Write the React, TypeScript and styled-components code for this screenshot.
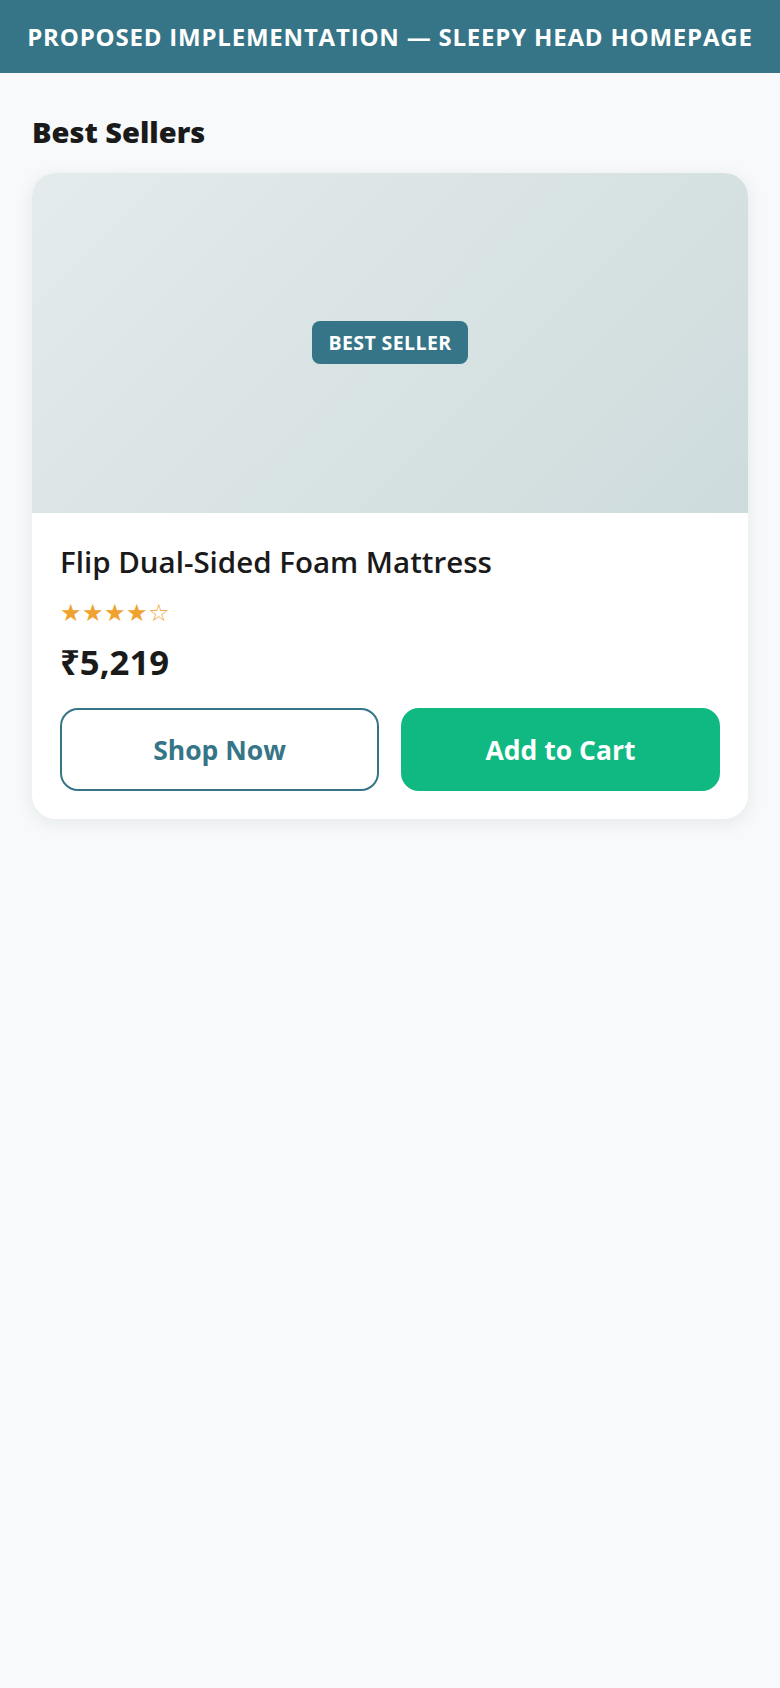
import React from "react";
import styled, { createGlobalStyle } from "styled-components";

const GlobalStyle = createGlobalStyle`
  html, body {
    margin: 0;
    padding: 0;
    background: #f7f9fa;
    font-family: "Open Sans", "Noto Sans", "Liberation Sans", sans-serif;
    color: #1c1c1e;
  }
  * { box-sizing: border-box; }
`;

const Page = styled.div`
  min-height: 1688px;
  background: #f7f9fa;
`;

const Header = styled.header`
  background: #367587;
  color: #ffffff;
  height: 73px;
  display: flex;
  align-items: center;
  justify-content: center;
  font-size: 24px;
  font-weight: 700;
  letter-spacing: 0.8px;
  white-space: nowrap;
`;

const Main = styled.main`
  padding: 42px 32px;
  display: flex;
  flex-direction: column;
  gap: 23px;
`;

const SectionTitle = styled.h2`
  margin: 0;
  font-size: 29px;
  font-weight: 800;
  line-height: 1.2;
  color: #1a1a1a;
`;

const Card = styled.article`
  background: #ffffff;
  border-radius: 24px;
  overflow: hidden;
  box-shadow: 0 4px 18px rgba(20, 40, 50, 0.08);
`;

const ImageArea = styled.div`
  height: 340px;
  background: linear-gradient(135deg, #e4ebec 0%, #cedbdc 100%);
  display: flex;
  align-items: center;
  justify-content: center;
`;

const Badge = styled.span`
  background: #367587;
  color: #ffffff;
  border-radius: 8px;
  height: 43px;
  padding: 0 16px;
  display: inline-flex;
  align-items: center;
  font-size: 19.5px;
  font-weight: 700;
  letter-spacing: 0.4px;
`;

const Body = styled.div`
  padding: 30px 28px 28px;
  display: flex;
  flex-direction: column;
`;

const ProductName = styled.h3`
  margin: 0;
  font-size: 29.5px;
  font-weight: 600;
  line-height: 1.3;
  color: #1a1a1a;
`;

const Stars = styled.div`
  margin-top: 17px;
  font-size: 23.7px;
  line-height: 1.2;
  color: #f0a22e;
  letter-spacing: 0;
`;

const Price = styled.div`
  margin-top: 14px;
  font-size: 34.7px;
  font-weight: 700;
  line-height: 1.2;
  color: #1a1a1a;
`;

const Actions = styled.div`
  margin-top: 26px;
  display: grid;
  grid-template-columns: 1fr 1fr;
  gap: 22px;
`;

const ActionButton = styled.button<{ $primary?: boolean }>`
  height: 83px;
  border-radius: 18px;
  font-family: inherit;
  font-size: 26.5px;
  font-weight: 700;
  cursor: pointer;
  border: 2px solid ${(p) => (p.$primary ? "#10b981" : "#367587")};
  background: ${(p) => (p.$primary ? "#10b981" : "#ffffff")};
  color: ${(p) => (p.$primary ? "#ffffff" : "#367587")};
`;

export default function App() {
  return (
    <Page>
      <GlobalStyle />
      <Header>PROPOSED IMPLEMENTATION — SLEEPY HEAD HOMEPAGE</Header>
      <Main>
        <SectionTitle>Best Sellers</SectionTitle>
        <Card>
          <ImageArea>
            <Badge>BEST SELLER</Badge>
          </ImageArea>
          <Body>
            <ProductName>Flip Dual-Sided Foam Mattress</ProductName>
            <Stars>★★★★☆</Stars>
            <Price>₹5,219</Price>
            <Actions>
              <ActionButton>Shop Now</ActionButton>
              <ActionButton $primary>Add to Cart</ActionButton>
            </Actions>
          </Body>
        </Card>
      </Main>
    </Page>
  );
}
